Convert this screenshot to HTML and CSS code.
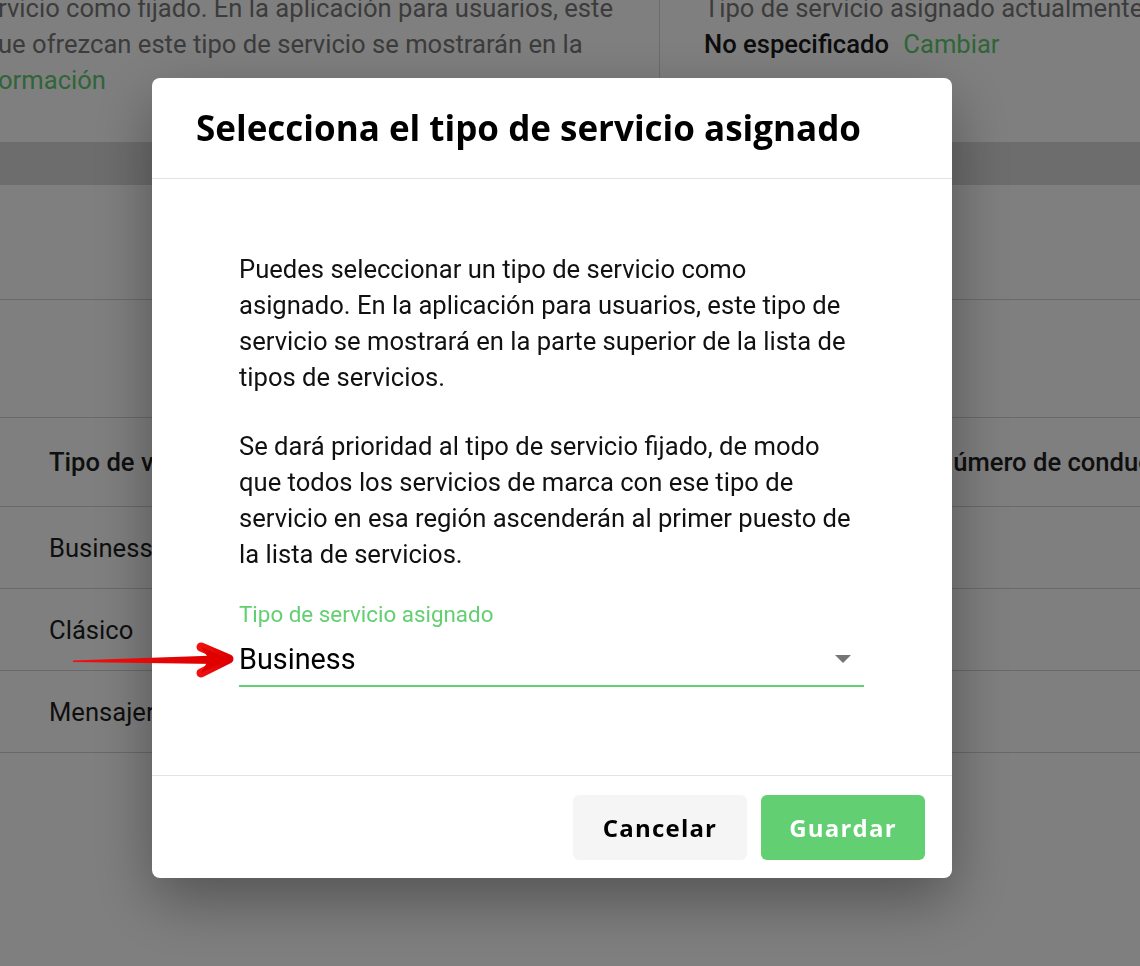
FILE: index.html
```html
<!DOCTYPE html>
<html lang="es">
<head>
    <meta charset="UTF-8">
    <meta name="viewport" content="width=device-width, initial-scale=1.0">
    <title>Tipo de servicio asignado</title>
    <link rel="stylesheet" href="styles.css">
</head>
<body>
    <div class="page">
        <div class="summary">
            <div class="summary-left">
                <p>rvicio como fijado. En la aplicación para usuarios, este<br>
                ue ofrezcan este tipo de servicio se mostrarán en la<br>
                <a href="#">ormación</a></p>
            </div>
            <div class="summary-right">
                <p>Tipo de servicio asignado actualmente</p>
                <p><strong>No especificado</strong> <a href="#">Cambiar</a></p>
            </div>
        </div>
        <div class="band"></div>
        <div class="filters"></div>
        <div class="toolbar"></div>
        <div class="table">
            <div class="row head">
                <span class="col-type">Tipo de vehículo</span>
                <span class="col-drivers">Número de conductores</span>
            </div>
            <div class="row"><span class="col-type">Business</span></div>
            <div class="row"><span class="col-type">Clásico</span></div>
            <div class="row"><span class="col-type">Mensajero</span></div>
        </div>
    </div>

    <!-- Modal -->
    <div class="overlay">
        <div class="modal">
            <div class="modal-header">
                <h2>Selecciona el tipo de servicio asignado</h2>
            </div>
            <div class="modal-body">
                <p>Puedes seleccionar un tipo de servicio como asignado. En la aplicación para usuarios, este tipo de servicio se mostrará en la parte superior de la lista de tipos de servicios.</p>
                <p>Se dará prioridad al tipo de servicio fijado, de modo que todos los servicios de marca con ese tipo de servicio en esa región ascenderán al primer puesto de la lista de servicios.</p>
                <div class="field">
                    <label>Tipo de servicio asignado</label>
                    <div class="select">
                        <span>Business</span>
                        <svg class="caret" width="18" height="10" viewBox="0 0 18 10"><path d="M1 1h16L9 9z" fill="#757575"/></svg>
                    </div>
                </div>
            </div>
            <div class="modal-footer">
                <button class="btn btn-cancel">Cancelar</button>
                <button class="btn btn-save">Guardar</button>
            </div>
        </div>
    </div>

    <!-- annotation arrow -->
    <svg class="arrow" width="170" height="40" viewBox="0 0 170 40">
        <defs>
            <linearGradient id="red" x1="0" x2="1" y1="0" y2="0">
                <stop offset="0" stop-color="#f01010"/>
                <stop offset="1" stop-color="#dd0000"/>
            </linearGradient>
        </defs>
        <polygon points="3,19.5 146,14.5 146,23 3,21" fill="url(#red)"/>
        <polyline points="131,6 159,18 131,32" fill="none" stroke="url(#red)" stroke-width="9" stroke-linecap="round" stroke-linejoin="round"/>
        <polygon points="131,6 159,18 131,32 139,18" fill="#e00000"/>
    </svg>
</body>
</html>
```

FILE: styles.css
```css
body {
    margin: 0;
    font-family: Roboto, "Liberation Sans", sans-serif;
    background-color: #fff;
    color: #222;
    overflow: hidden;
    height: 966px;
}
p {
    margin: 0;
}
a {
    color: #5fcb70;
    text-decoration: none;
}
.page {
    width: 1140px;
}
.summary {
    display: flex;
    height: 152px;
    margin-top: -10px;
}
.summary-left {
    flex-shrink: 0;
    width: 659px;
    border-right: 1px solid #d8d8d8;
    height: 130px;
    font-size: 25.6px;
    line-height: 36px;
    color: #787878;
    white-space: nowrap;
}
.summary-left p {
    margin-left: -2px;
}
.summary-right {
    padding-left: 44px;
    font-size: 25.6px;
    line-height: 36px;
    color: #787878;
    white-space: nowrap;
}
.summary-right strong {
    color: #1a1a1a;
    font-weight: 500;
    margin-right: 8px;
}
.band {
    height: 43px;
    background-color: #dadada;
}
.filters {
    height: 114px;
    border-bottom: 1px solid #d2d2d2;
}
.toolbar {
    height: 117px;
    border-bottom: 1px solid #d2d2d2;
}
.row {
    display: flex;
    align-items: center;
    height: 81px;
    border-bottom: 1px solid #d2d2d2;
    font-size: 25.6px;
    color: #1e1e1e;
    white-space: nowrap;
}
.row.head {
    height: 88px;
    font-weight: 500;
}
.col-type {
    flex-shrink: 0;
    padding-left: 49px;
    width: 886px;
}
.overlay {
    position: fixed;
    left: 0;
    top: 0;
    width: 100%;
    height: 100%;
    background-color: rgba(0, 0, 0, 0.5);
    display: flex;
    align-items: flex-start;
    padding: 78px 0 0 152px;
    box-sizing: border-box;
}
.modal {
    width: 800px;
    background-color: #fff;
    border-radius: 8px;
    box-shadow: 0 22px 60px rgba(0, 0, 0, 0.35);
}
.modal-header {
    height: 100px;
    padding: 0 44px;
    border-bottom: 1px solid #e3e3e3;
    display: flex;
    align-items: center;
}
.modal-header h2 {
    margin: 0 0 2px;
    font-family: "Open Sans", Lato, sans-serif;
    font-weight: 700;
    font-size: 35px;
    color: #000;
}
.modal-body {
    padding: 72px 87px 88px;
    font-size: 25.6px;
    line-height: 36px;
    color: #111;
}
.modal-body p {
    width: 622px;
    margin-bottom: 33px;
}
.modal-body p + p {
    margin-bottom: 29px;
}
.field {
    width: 625px;
}
.field label {
    display: block;
    font-size: 22.4px;
    line-height: 26px;
    color: #62cf72;
}
.select {
    display: flex;
    align-items: center;
    justify-content: space-between;
    margin-top: 15px;
    height: 34px;
    padding-bottom: 9px;
    border-bottom: 2px solid #62cf72;
    font-size: 28.8px;
    color: #000;
}
.caret {
    margin-right: 12px;
}
.modal-footer {
    border-top: 1px solid #e3e3e3;
    display: flex;
    justify-content: flex-end;
    gap: 14px;
    padding: 19px 27px 18px;
}
.btn {
    height: 65px;
    border: none;
    border-radius: 6px;
    font-family: "Open Sans", Lato, sans-serif;
    font-weight: 700;
    font-size: 24px;
    letter-spacing: 1.2px;
    cursor: pointer;
}
.btn-cancel {
    width: 174px;
    background-color: #f5f5f5;
    color: #000;
}
.btn-save {
    width: 164px;
    background-color: #62cf72;
    color: #fff;
}
.arrow {
    position: absolute;
    left: 70px;
    top: 641px;
}
```
